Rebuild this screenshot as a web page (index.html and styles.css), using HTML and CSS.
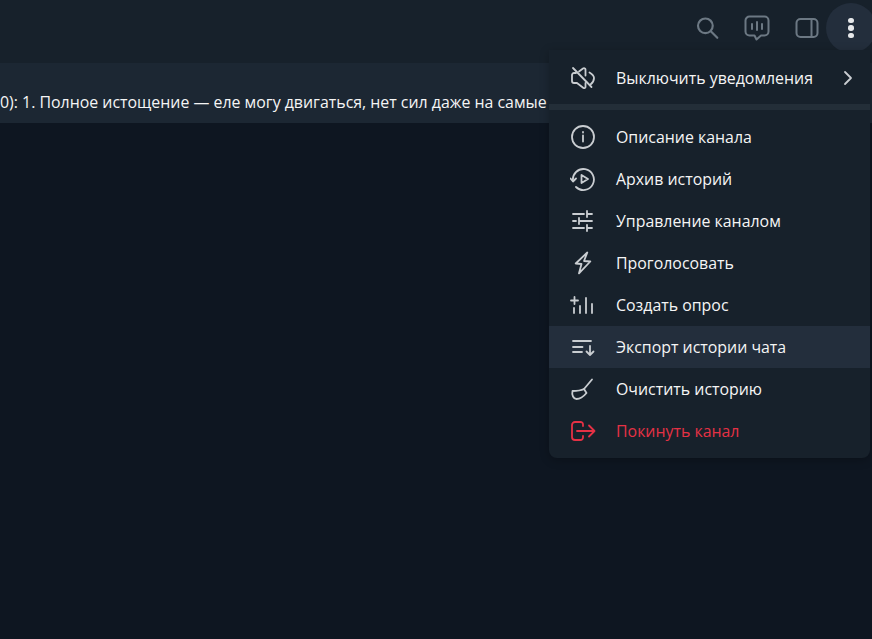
FILE: index.html
```html
<!DOCTYPE html>
<html lang="ru">
<head>
  <meta charset="UTF-8" />
  <title>Канал</title>
  <link rel="stylesheet" href="styles.css">
</head>
<body>
  <header class="topbar">
    <button class="icon-btn">
      <svg width="26" height="26" viewBox="0 0 24 24"><circle cx="10.500" cy="10" r="6.800"/><path d="M15.500 15l6 6"/></svg>
    </button>
    <button class="icon-btn">
      <svg width="26" height="26" viewBox="0 0 26 26"><path d="M5.500 1.500h15a4 4 0 0 1 4 4v11a4 4 0 0 1-4 4h-3.500l-4.500 4-2-4h-5a4 4 0 0 1-4-4v-11a4 4 0 0 1 4-4z"/><path d="M8 9v5M13 7v8M18 9v5"/></svg>
    </button>
    <button class="icon-btn">
      <svg width="24" height="24" viewBox="0 0 24 24"><rect x="1.500" y="3" width="21" height="18" rx="4"/><path d="M16.500 3v18"/></svg>
    </button>
    <button class="icon-btn more">
      <span class="dot"></span><span class="dot"></span><span class="dot"></span>
    </button>
  </header>

  <div class="pinned">
    <p class="pinned-text">0): 1. Полное истощение — еле могу двигаться, нет сил даже на самые простые действия</p>
  </div>

  <div class="menu">
    <div class="menu-item">
      <svg viewBox="0 0 26 26"><path d="M6 8H4a2 2 0 0 0-2 2v6a2 2 0 0 0 2 2h3l6.500 5c1 .5 2 0 2-1v-4"/><path d="M9 6.500l4-3c1-.7 2.500-.2 2.500 1v6"/><path d="M3 3l18.500 19"/><path d="M19.500 7.500C22 9 24 11 24 13c0 2.500-1.500 5-3.500 6.500"/></svg>
      <span class="menu-label">Выключить уведомления</span>
      <svg class="chevron" viewBox="0 0 12 16"><path d="M3 2l6 6-6 6"/></svg>
    </div>
    <div class="menu-sep"></div>
    <div class="menu-item">
      <svg viewBox="0 0 26 26"><circle cx="13" cy="13" r="11"/><path d="M13 11.500v6"/><path d="M13 8v.5"/></svg>
      <span class="menu-label">Описание канала</span>
    </div>
    <div class="menu-item">
      <svg viewBox="0 0 26 26"><path d="M3 15A10.500 10.500 0 1 1 6 21"/><path d="M.5 12.500l2.500 3 3-3"/><path d="M11.500 9l6.500 4-6.500 4z"/></svg>
      <span class="menu-label">Архив историй</span>
    </div>
    <div class="menu-item">
      <svg viewBox="0 0 26 26"><path d="M3 6h11M17 3v6M17 6h5M3 13h3M9 10v6M9 13h13M3 20h11M17 17v6M17 20h5"/></svg>
      <span class="menu-label">Управление каналом</span>
    </div>
    <div class="menu-item">
      <svg viewBox="0 0 26 26"><path d="M17.300 2.500L5.700 13.500l5.800.5L9 23.300 20.300 11.500l-6.300-.5z"/></svg>
      <span class="menu-label">Проголосовать</span>
    </div>
    <div class="menu-item">
      <svg viewBox="0 0 26 26"><path d="M1 8.500h7M4.500 5v7M4 16v5M10 14v7M16 6v15M22 12v9"/></svg>
      <span class="menu-label">Создать опрос</span>
    </div>
    <div class="menu-item active">
      <svg viewBox="0 0 26 26"><path d="M3 7h18M3 13h9.500M3 18h9M20 12v9M16.500 17.500L20 21l3.500-3.500"/></svg>
      <span class="menu-label">Экспорт истории чата</span>
    </div>
    <div class="menu-item">
      <svg viewBox="0 0 26 26"><path d="M22 3.500L14 13"/><path d="M2.500 15C7 15 11 14.500 14 13L16.500 17C14 20 10 23 6.500 23 3.500 23 1.500 19 2.500 15z"/></svg>
      <span class="menu-label">Очистить историю</span>
    </div>
    <div class="menu-item danger">
      <svg viewBox="0 0 26 26"><path d="M13 8V6.500A2.500 2.500 0 0 0 10.500 4H5a3 3 0 0 0-3 3v12a3 3 0 0 0 3 3h5.500a2.500 2.500 0 0 0 2.500-2.500V18"/><path d="M7 13h17.500M19 7.500l5.500 5.500-5.500 5.500"/></svg>
      <span class="menu-label">Покинуть канал</span>
    </div>
  </div>
</body>
</html>
```

FILE: styles.css
```css
:root {
  --bg: #0e1621;
  --header: #17212b;
  --pinned: #1c2733;
  --menu: #17212b;
  --hover: #232e3c;
  --text: #f5f5f5;
  --icon: #c9cdd1;
  --muted: #6c7883;
  --danger: #e53145;
}

* {
  box-sizing: border-box;
}

html,
body {
  height: 100%;
}

body {
  margin: 0;
  overflow: hidden;
  background-color: var(--bg);
  font-family: "Open Sans", "Noto Sans", sans-serif;
  color: var(--text);
}

.topbar {
  display: flex;
  align-items: center;
  justify-content: flex-end;
  height: 63px;
  padding: 0 0 7px;
  background: var(--header);
}

.icon-btn {
  display: flex;
  flex-direction: column;
  align-items: center;
  justify-content: center;
  flex: none;
  width: 50px;
  height: 50px;
  padding: 0;
  background: none;
  border: none;
  border-radius: 50%;
  color: var(--muted);
}

.icon-btn:nth-child(3) {
  margin-right: -6px;
}

.icon-btn svg {
  fill: none;
  stroke: currentColor;
  stroke-width: 2;
  stroke-linecap: round;
  stroke-linejoin: round;
}

.more {
  margin-right: -4px;
  gap: 2px;
  background: var(--hover);
}

.dot {
  width: 5.500px;
  height: 5.500px;
  border-radius: 50%;
  background: #e6e8ea;
}

.pinned {
  height: 60px;
  padding-top: 18px;
  display: flex;
  align-items: center;
  background: var(--pinned);
  overflow: hidden;
}

.pinned-text {
  margin: 0;
  white-space: nowrap;
  font-size: 15.900px;
}

.menu {
  position: absolute;
  top: 50px;
  left: 549px;
  width: 321px;
  padding: 7px 0 6px;
  background: var(--menu);
  border-radius: 0 0 8px 8px;
  box-shadow: 0 2px 10px rgba(0, 0, 0, 0.25);
}

.menu-item {
  display: flex;
  align-items: center;
  height: 42px;
  padding: 0 16px 0 21px;
  font-size: 15.900px;
}

.menu-item svg {
  flex: none;
  width: 26px;
  height: 26px;
  fill: none;
  stroke: var(--icon);
  stroke-width: 1.800;
  stroke-linecap: round;
  stroke-linejoin: round;
}

.menu-label {
  margin-left: 20px;
  flex: 1;
}

.menu-item .chevron {
  width: 12px;
  height: 16px;
}

.menu-sep {
  height: 6px;
  margin: 5px 0 6px;
  background: #232e38;
}

.active {
  background: var(--hover);
}

.danger {
  color: var(--danger);
}

.menu-item.danger svg {
  stroke: var(--danger);
}
```
